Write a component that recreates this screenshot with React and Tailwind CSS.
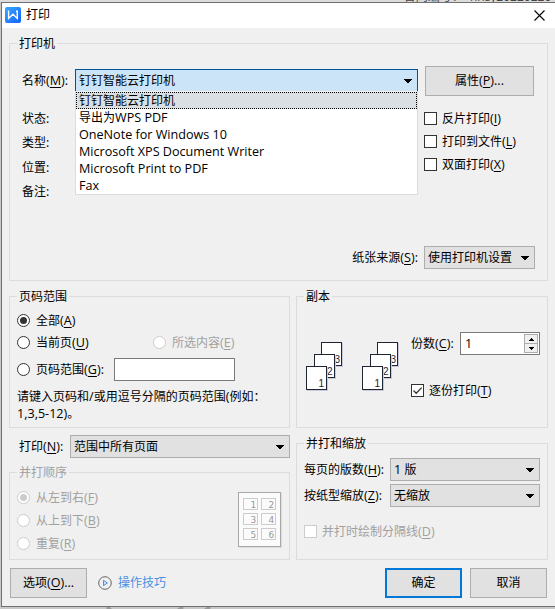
import React from 'react';
import clsx from 'clsx';

const printers = [
  '钉钉智能云打印机',
  '导出为WPS PDF',
  'OneNote for Windows 10',
  'Microsoft XPS Document Writer',
  'Microsoft Print to PDF',
  'Fax',
];

// Han text is set at 12px, latin runs slightly larger
const Mixed = ({ text }) =>
  text.split(/([\x20-\x7e]+)/).filter(Boolean).map((part, i) => (
    <span key={i} className={/[\x20-\x7e]/.test(part) ? 'text-[12.6px]' : 'text-[12px]'}>{part}</span>
  ));

const Label = ({ text, hotkey, tail = '', disabled, className }) => (
  <span className={clsx('whitespace-nowrap leading-4', disabled && 'text-[#a0a0a0]', className)}>
    <Mixed text={text} />
    {hotkey && (
      <span className="text-[12.6px]">
        (<span className="underline underline-offset-2 decoration-1">{hotkey}</span>){tail}
      </span>
    )}
  </span>
);

const Group = ({ title, disabled, className, children }) => (
  <section className={clsx('flex flex-col border border-[#dcdcdc]', className)}>
    <div className="flex h-0 items-center pl-[7px]">
      <span className={clsx('-mt-px bg-[#f0f0f0] pl-[2px] pr-[2px] leading-4', disabled && 'text-[#a0a0a0]')}>{title}</span>
    </div>
    {children}
  </section>
);

const Arrow = () => (
  <svg width="8" height="4" viewBox="0 0 8 4" className="shrink-0" shapeRendering="crispEdges">
    <path d="M0 0h8v1H7v1H6v1H5v1H3V3H2V2H1V1H0z" fill="#000" />
  </svg>
);

const Select = ({ value, className }) => (
  <div className={clsx('flex h-[23px] items-center justify-between border border-[#adadad] bg-[#e1e1e1] pl-[3px] pr-[5px]', className)}>
    <Label text={value} />
    <Arrow />
  </div>
);

const Checkbox = ({ checked, disabled, children }) => (
  <div className="flex h-[23px] items-center gap-[5px]">
    <span className={clsx('h-[13px] w-[13px] shrink-0 border bg-white', disabled ? 'border-[#ccc]' : 'border-[#333]')}>
      {checked && (
        <svg width="11" height="11" viewBox="0 0 11 11">
          <path d="M1.5 5.5l2.7 2.7L9.6 2.6" fill="none" stroke="#333" strokeWidth="1.3" />
        </svg>
      )}
    </span>
    {children}
  </div>
);

const Radio = ({ checked, disabled, children }) => (
  <div className="flex h-[23px] items-center gap-[6px]">
    <span className={clsx('flex h-[13px] w-[13px] shrink-0 items-center justify-center rounded-full border bg-white', disabled ? 'border-[#ccc]' : 'border-[#333]')}>
      {checked && <span className={clsx('h-[7px] w-[7px] rounded-full', disabled ? 'bg-[#ccc]' : 'bg-[#333]')} />}
    </span>
    {children}
  </div>
);

const Button = ({ primary, className, children }) => (
  <button className={clsx('flex h-[30px] items-center justify-center bg-[#e1e1e1]', primary ? 'border-2 border-[#0078d7]' : 'border border-[#adadad]', className)}>
    {children}
  </button>
);

const sheets = [
  { x: 15.5, y: 0.5, n: 3, tx: 28.5 },
  { x: 8.5, y: 12.5, n: 2, tx: 21 },
  { x: 0.5, y: 24.5, n: 1, tx: 12.5 },
];

const Sheets = () => (
  <svg width="38" height="49" viewBox="0 0 38 49">
    {sheets.map((s) => (
      <g key={s.n}>
        <rect x={s.x + 1} y={s.y + 1} width="20" height="23" fill="none" stroke="#c9c9da" />
        <rect x={s.x} y={s.y} width="20" height="23" fill="#fff" stroke="#1f2433" />
        <text x={s.tx} y={s.y + 20.5} fontSize="10" fill="#1f2433" fontFamily="Liberation Sans, sans-serif">{s.n}</text>
      </g>
    ))}
  </svg>
);

const PagePreview = () => (
  <svg width="44" height="56" viewBox="0 0 44 56">
    <rect x="1.5" y="1.5" width="42" height="54" fill="none" stroke="#dcdcdc" />
    <rect x="0.5" y="0.5" width="42" height="54" fill="#fbfbfb" stroke="#a8a8a8" />
    {[1, 2, 3, 4, 5, 6].map((n, i) => (
      <g key={n}>
        <rect x={5.5 + (i % 2) * 18} y={6.5 + Math.floor(i / 2) * 15} width="14" height="11" fill="none" stroke="#ccc" />
        <text x={12.5 + (i % 2) * 18} y={15.5 + Math.floor(i / 2) * 15} fontSize="9" fill="#999" fontFamily="DejaVu Sans, sans-serif">{n}</text>
      </g>
    ))}
  </svg>
);

const TitleBar = () => (
  <header className="flex h-[25px] items-center bg-white pl-[3px] pr-[10px]">
    <svg width="16" height="16" viewBox="0 0 16 16" className="-mt-px">
      <defs>
        <linearGradient id="logo" x1="0" y1="0" x2="1" y2="1">
          <stop offset="0" stopColor="#35aaff" />
          <stop offset="1" stopColor="#1261ff" />
        </linearGradient>
      </defs>
      <rect width="16" height="16" rx="2" fill="url(#logo)" />
      <path d="M2.8 4.2h1.4M11 4.2h1.9M3.6 4.2v7.2L8 7.2l4.3 4.2V4.2" fill="none" stroke="#fff" strokeWidth="1.4" />
    </svg>
    <span className="-mt-px ml-[5px]">打印</span>
    <svg width="11" height="11" viewBox="0 0 11 11" className="-mt-px ml-auto">
      <path d="M.5.5l10 10M10.5.5l-10 10" stroke="#000" strokeWidth="1.1" />
    </svg>
  </header>
);

const PrinterSelect = () => (
  <div className="relative mt-[25px] h-[23px] w-[343px] border border-[#005499] bg-[#cce4f7]">
    <div className="flex h-full items-center justify-between pl-[3px] pr-[5px]">
      <Label text={printers[0]} />
      <Arrow />
    </div>
    <ul className="absolute -left-px top-[21px] w-[343px] border border-[#dcdcdc] border-t-[#f0f0f0] bg-white">
      {printers.map((name, i) => (
        <li key={name} className={clsx('flex h-[17px] items-center pl-[3px]', i === 0 && 'bg-[#dadfe4] outline-1 -outline-offset-1 outline-dotted outline-black')}>
          <Label text={name} />
        </li>
      ))}
    </ul>
  </div>
);

export default function App() {
  return (
    <div className="h-[609px] w-[555px] overflow-hidden bg-[#c8c8c8] text-[12px] leading-4 text-black [font-family:'Open_Sans','Noto_Sans_CJK_SC',sans-serif]">
      {/* sliver of the document behind the dialog */}
      <div className="flex h-[2px] items-end justify-end overflow-hidden bg-[#dcdcdc] text-[#444]">
        <span className="-mb-[3px] -mr-[7px] whitespace-nowrap">合同编号：&nbsp; hnsy20220220-1</span>
      </div>
      <main className="ml-px flex h-[605px] flex-col border border-r-0 border-[#707070] bg-[#f0f0f0]">
        <TitleBar />

        <Group title="打印机" className="ml-[7px] mt-[15px] h-[238px] w-[539px]">
          <div className="flex pl-[12px]">
            <div className="flex w-[53px] flex-col">
              <Label text="名称" hotkey="M" tail=":" className="mt-[29px] h-4" />
              <Label text="状态:" className="mt-[22px] h-4" />
              <Label text="类型:" className="mt-[8px] h-4" />
              <Label text="位置:" className="mt-[9px] h-4" />
              <Label text="备注:" className="mt-[8px] h-4" />
            </div>
            <PrinterSelect />
            <div className="ml-[6px] mt-[22px]">
              <Button className="ml-px w-[109px]"><Label text="属性" hotkey="P" tail="..." /></Button>
              <div className="mt-[11px]">
                <Checkbox><Label text="反片打印" hotkey="I" /></Checkbox>
                <Checkbox><Label text="打印到文件" hotkey="L" /></Checkbox>
                <Checkbox><Label text="双面打印" hotkey="X" /></Checkbox>
              </div>
            </div>
          </div>
          <div className="mb-[11px] mr-[12px] mt-auto flex items-center justify-end">
            <Label text="纸张来源" hotkey="S" tail=":" className="mr-[6px]" />
            <Select value="使用打印机设置" className="w-[111px]" />
          </div>
        </Group>

        <div className="ml-[7px] mt-[15px] flex h-[264px] gap-[6px]">
          <div className="w-[281px]">
            <Group title="页码范围" className="h-[132px]">
              <div className="pl-[7px] pt-[12px]">
                <Radio checked><Label text="全部" hotkey="A" /></Radio>
                <div className="-mt-px flex">
                  <div className="w-[136px]"><Radio><Label text="当前页" hotkey="U" /></Radio></div>
                  <Radio disabled><Label text="所选内容" hotkey="E" disabled /></Radio>
                </div>
                <div className="mt-[4px] flex items-center">
                  <div className="w-[97px]"><Radio><Label text="页码范围" hotkey="G" tail=":" /></Radio></div>
                  <input className="h-[23px] w-[121px] border border-[#7a7a7a] bg-white" />
                </div>
                <p className="mt-[7px] whitespace-nowrap leading-[17px]">
                  <Mixed text="请键入页码和/或用逗号分隔的页码范围(例如：" /><br />
                  <Mixed text="1,3,5-12)。" />
                </p>
              </div>
            </Group>
            <div className="mt-[7px] flex items-center">
              <div className="w-[61px] pl-[10px]"><Label text="打印" hotkey="N" tail=":" /></div>
              <Select value="范围中所有页面" className="w-[220px]" />
            </div>
            <Group title="并打顺序" disabled className="mt-[14px] h-[88px]">
              <div className="flex justify-between pl-[7px] pr-[7px]">
                <div className="pt-[13px]">
                  <Radio checked disabled><Label text="从左到右" hotkey="F" disabled /></Radio>
                  <Radio disabled><Label text="从上到下" hotkey="B" disabled /></Radio>
                  <Radio disabled><Label text="重复" hotkey="R" disabled /></Radio>
                </div>
                <div className="pt-[19px]"><PagePreview /></div>
              </div>
            </Group>
          </div>

          <div className="w-[252px]">
            <Group title="副本" className="h-[132px]">
              <div className="flex pl-[9px]">
                <div className="flex w-[105px] gap-[18px] pt-[45px]">
                  <Sheets />
                  <Sheets />
                </div>
                <div className="pt-[35px]">
                  <div className="flex items-center">
                    <Label text="份数" hotkey="C" tail=":" className="w-[49px]" />
                    <div className="flex h-[23px] w-[80px] items-center justify-between border border-[#7a7a7a] bg-white pl-[4px] pr-px">
                      <Label text="1" />
                      <div className="flex w-[14px] flex-col gap-px border border-[#adadad] bg-[#adadad]">
                        <span className="flex h-[8px] items-center justify-center bg-[#f0f0f0]">
                          <svg width="5" height="3" shapeRendering="crispEdges"><path d="M2 0h1v1h1v1h1v1H0V2h1V1h1z" /></svg>
                        </span>
                        <span className="flex h-[8px] items-center justify-center bg-[#f0f0f0]">
                          <svg width="5" height="3" shapeRendering="crispEdges"><path d="M0 0h5v1H4v1H3v1H2V2H1V1H0z" /></svg>
                        </span>
                      </div>
                    </div>
                  </div>
                  <div className="mt-[24px]">
                    <Checkbox checked><Label text="逐份打印" hotkey="T" /></Checkbox>
                  </div>
                </div>
              </div>
            </Group>
            <Group title="并打和缩放" className="mt-[15px] h-[117px]">
              <div className="pl-[7px] pt-[14px]">
                <div className="flex items-center">
                  <Label text="每页的版数" hotkey="H" tail=":" className="w-[86px]" />
                  <Select value="1 版" className="w-[150px]" />
                </div>
                <div className="mt-[3px] flex items-center">
                  <Label text="按纸型缩放" hotkey="Z" tail=":" className="w-[86px]" />
                  <Select value="无缩放" className="w-[150px]" />
                </div>
                <div className="mt-[13px]">
                  <Checkbox disabled><Label text="并打时绘制分隔线" hotkey="D" disabled /></Checkbox>
                </div>
              </div>
            </Group>
          </div>
        </div>

        <footer className="mt-[8px] flex items-center pl-[8px]">
          <Button className="w-[77px]"><Label text="选项" hotkey="O" tail="..." /></Button>
          <a className="ml-[11px] flex items-center gap-[6px] text-[#4a90e2]">
            <svg width="14" height="14" viewBox="0 0 14 14">
              <circle cx="7" cy="7" r="6.3" fill="none" stroke="#666" />
              <path d="M5.5 4.3v5.4L9.4 7z" fill="#cfe4fb" stroke="#4a90e2" />
            </svg>
            操作技巧
          </a>
          <Button primary className="ml-auto w-[77px]">确定</Button>
          <Button className="ml-[8px] mr-[8px] w-[77px]">取消</Button>
        </footer>
      </main>
      <svg width="555" height="2" className="block">
        <path d="M107 0l4 3M183 0l-5 3M210 0l-5 3" stroke="#999" strokeWidth="3" />
      </svg>
    </div>
  );
}
